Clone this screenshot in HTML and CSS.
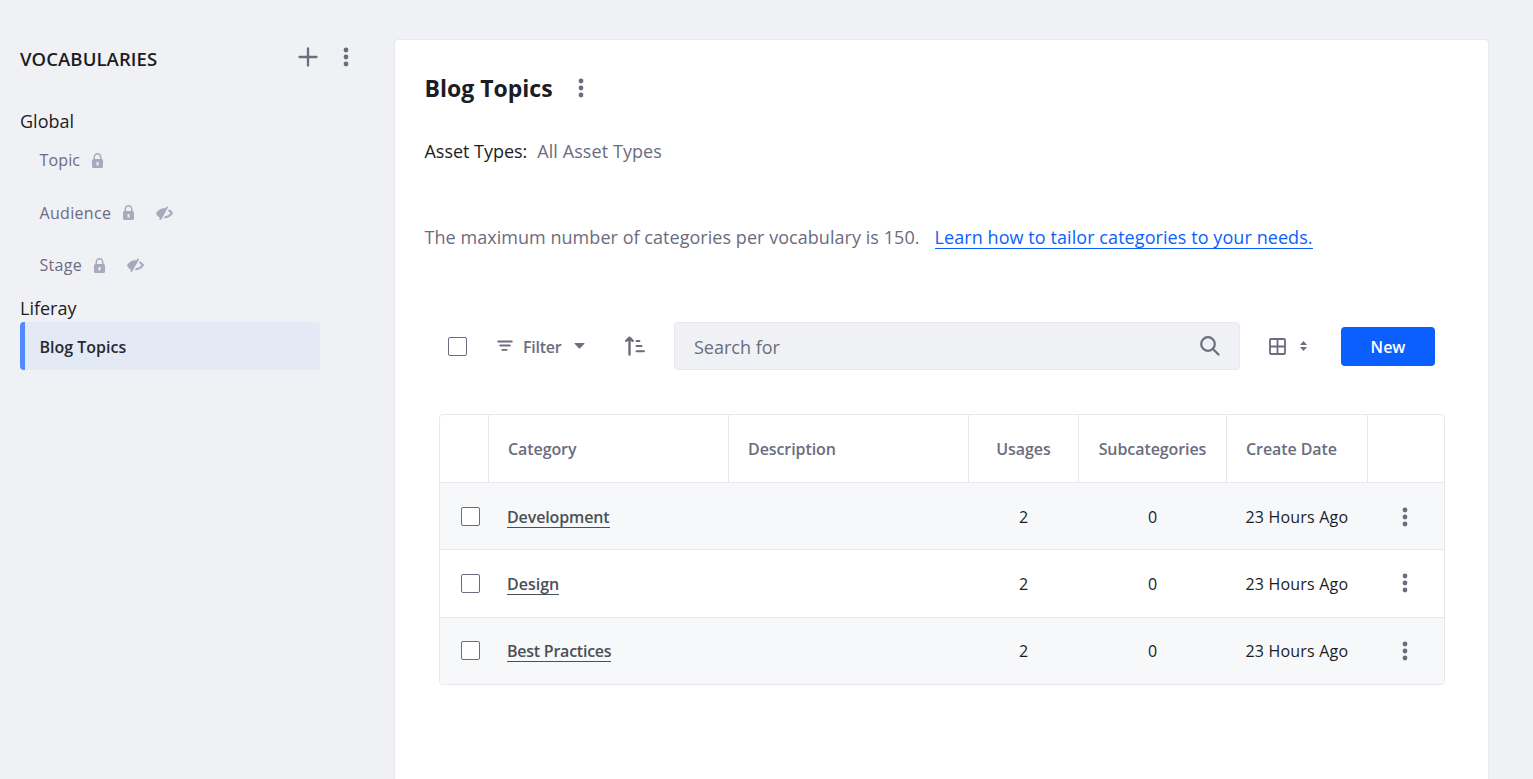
FILE: index.html
```html
<!DOCTYPE html>
<html lang="en">
<head>
<meta charset="utf-8">
<title>Categories</title>
<link rel="stylesheet" href="styles.css">
</head>
<body>
<svg class="sprite" aria-hidden="true">
  <symbol id="dots" viewBox="0 0 6 20"><circle cx="3" cy="3" r="2.400"/><circle cx="3" cy="10" r="2.400"/><circle cx="3" cy="17" r="2.400"/></symbol>
  <symbol id="lock" viewBox="0 0 11 15"><path d="M1.500 6V4.500a4 4.500 0 0 1 8 0V6a1.500 1.500 0 0 1 1.500 1.500v6A1.500 1.500 0 0 1 9.500 15h-8A1.500 1.500 0 0 1 0 13.500v-6A1.500 1.500 0 0 1 1.500 6zM3 6h5V4.500a2.500 3 0 0 0-5 0zM4.500 9v3.500h2V9z" fill-rule="evenodd"/></symbol>
  <symbol id="hidden" viewBox="0 0 17 14"><path d="M10.600.5a1 1 0 0 1 1.300 1.200L5.400 13.200a1.100 1.100 0 0 1-2-1L3.800 11.500C2 10.500.6 9 .2 8a1 1 0 0 1 0-1C2 4 5 2.300 8.500 2.300h1z"/><path d="M13 3.200c1.700 1 3 2.200 3.800 3.400a1 1 0 0 1 0 .9C15 10.700 12 12.300 7.800 12.300l1.200-2.100c2.400-.1 4.200-1.200 5.500-3.100-.6-.8-1.500-1.500-2.500-2.100z"/></symbol>
</svg>
<div class="page">
  <aside class="sidebar">
    <header class="side-head">
      <h2 class="side-title">VOCABULARIES</h2>
      <svg class="plus" viewBox="0 0 20 20"><path d="M10 1.500v17M1.500 10h17"/></svg>
      <svg class="dots"><use href="#dots"/></svg>
    </header>
    <div class="group">Global</div>
    <ul class="vocabs">
      <li class="vocab"><span>Topic</span><svg class="lock"><use href="#lock"/></svg></li>
      <li class="vocab vocab-wide"><span>Audience</span><svg class="lock"><use href="#lock"/></svg><svg class="eye"><use href="#hidden"/></svg></li>
      <li class="vocab vocab-wide"><span>Stage</span><svg class="lock"><use href="#lock"/></svg><svg class="eye"><use href="#hidden"/></svg></li>
    </ul>
    <div class="group group-site">Liferay</div>
    <div class="vocab-active"><span>Blog Topics</span></div>
  </aside>
  <main class="card">
    <div class="title-row"><h1 class="title">Blog Topics</h1><svg class="dots"><use href="#dots"/></svg></div>
    <div class="asset"><span class="asset-label">Asset Types:</span><span class="asset-value">All Asset Types</span></div>
    <div class="note"><span class="note-text">The maximum number of categories per vocabulary is 150.</span><a class="note-link">Learn how to tailor categories to your needs.</a></div>
    <div class="toolbar">
      <span class="check"></span>
      <svg class="filter-icon" viewBox="0 0 16 12"><path d="M1.200 1.500h13.600M3.200 5.500h9.600M5.200 9.800h4.600"/></svg>
      <span class="filter">Filter</span>
      <svg class="caret" viewBox="0 0 12 7"><path d="M.8 0h10.400q1.200 0 .5 1L6.700 6.200q-.7.700-1.400 0L.3 1Q-.4 0 .8 0z"/></svg>
      <svg class="sort" viewBox="0 0 20 20"><path d="M4.500 18.500V2.500M1.300 4.800L4.500 1.700 7.700 4.800"/><path class="sort-lines" d="M11.500 5h3M11.500 10h5M11.500 15.200h7.500"/></svg>
      <div class="search"><span>Search for</span><svg class="glass" viewBox="0 0 20 20"><circle cx="8" cy="8" r="6.800"/><path d="M13 13l5.500 5.500"/></svg></div>
      <svg class="grid" viewBox="0 0 17 17"><rect x="1" y="1" width="15" height="15" rx="1"/><path d="M8.500 1v15M1 8.500h15"/></svg>
      <svg class="updown" viewBox="0 0 7 10"><path d="M0 4L3.500 0 7 4zM0 6h7l-3.500 4z"/></svg>
      <button class="new">New</button>
    </div>
    <div class="table-wrap">
      <table class="table">
        <colgroup><col class="c-check"><col class="c-wide"><col class="c-wide"><col class="c-usage"><col class="c-sub"><col class="c-date"><col class="c-act"></colgroup>
        <thead><tr><th></th><th>Category</th><th>Description</th><th class="mid">Usages</th><th class="mid">Subcategories</th><th>Create Date</th><th></th></tr></thead>
        <tbody>
          <tr class="r1"><td class="pick"><span class="check"></span></td><td class="name"><a>Development</a></td><td></td><td class="mid">2</td><td class="mid">0</td><td class="date">23 Hours Ago</td><td class="act"><svg class="dots"><use href="#dots"/></svg></td></tr>
          <tr class="r2"><td class="pick"><span class="check"></span></td><td class="name"><a>Design</a></td><td></td><td class="mid">2</td><td class="mid">0</td><td class="date">23 Hours Ago</td><td class="act"><svg class="dots"><use href="#dots"/></svg></td></tr>
          <tr class="r3"><td class="pick"><span class="check"></span></td><td class="name tight"><a>Best Practices</a></td><td></td><td class="mid">2</td><td class="mid">0</td><td class="date">23 Hours Ago</td><td class="act"><svg class="dots"><use href="#dots"/></svg></td></tr>
        </tbody>
      </table>
    </div>
  </main>
</div>
</body>
</html>
```
FILE: styles.css
```css
* { box-sizing: border-box; }
body { margin: 0; background: #f0f1f5; font-family: "Open Sans", "Noto Sans", sans-serif; color: #1c1c24; overflow: hidden; }
h1, h2, ul { margin: 0; padding: 0; list-style: none; }
svg { display: block; flex: none; fill: #6b6c7e; }
.sprite { width: 0; height: 0; position: absolute; }
.page { display: flex; height: 779px; }
.dots { width: 6px; height: 20px; }

.sidebar { width: 394px; flex: none; padding: 45px 0 0 20px; }
.side-head { display: flex; align-items: center; height: 24px; }
.side-title { width: 278px; font-size: 18.500px; line-height: 26px; font-weight: 600; letter-spacing: 0.080px; padding-top: 3px; }
.plus { width: 20px; height: 20px; margin-right: 25px; fill: none; stroke: #6b6c7e; stroke-width: 2.300; stroke-linecap: round; }
.group { font-size: 18px; line-height: 26px; margin-top: 39px; height: 26px; }
.vocab { display: flex; align-items: center; height: 52.600px; padding-left: 19.500px; font-size: 16px; letter-spacing: 0.150px; color: #6b6c7e; }
.vocab-wide { letter-spacing: 0.320px; }
.vocabs { height: 157px; }
.lock { width: 11px; height: 15px; margin-left: 12px; fill: #a7a9bc; }
.eye { width: 17px; height: 14px; margin-left: 22px; fill: #a7a9bc; }
.group-site { margin-top: 4px; }
.vocab-active { display: flex; align-items: center; width: 300px; height: 48px; margin-top: 1px; padding: 2px 0 0 14.500px; border-left: 5px solid #528bff; border-radius: 4px; background: #e3eaf6; font-size: 16px; font-weight: 600; color: #272833; }

.card { width: 1095px; height: 760px; margin-top: 39px; padding: 32px 0 0 29.500px; background: #fff; border: 1px solid #e7e7ed; border-radius: 4px; }
.title-row { display: flex; align-items: center; height: 32px; gap: 25.500px; }
.title { font-size: 23px; line-height: 32px; font-weight: 700; }
.asset { display: flex; gap: 10px; margin-top: 33px; font-size: 18px; line-height: 28px; }
.asset-label { letter-spacing: -0.030px; }
.asset-value { letter-spacing: 0.080px; }
.asset-value, .note { color: #6b6c7e; }
.note { display: flex; gap: 15px; margin-top: 61px; height: 22px; font-size: 18px; line-height: 22px; letter-spacing: 0.045px; }
.note-link { color: #0b5fff; border-bottom: 1px solid #0b5fff; height: 23px; white-space: nowrap; letter-spacing: 0.075px; }
.note-text { white-space: nowrap; }

.toolbar { display: flex; align-items: center; height: 48px; margin: 74px 0 0 23.500px; }
.check { display: block; width: 19px; height: 19px; border: 1px solid #6b6c7e; border-radius: 2px; background: #fff; flex: none; }
.filter-icon { width: 16px; height: 12px; margin-left: 29.500px; fill: none; stroke: #6b6c7e; stroke-width: 1.800; stroke-linecap: round; }
.filter { width: 39px; margin-left: 10.500px; padding-top: 1px; font-size: 16px; letter-spacing: -0.250px; font-weight: 600; color: #6b6c7e; }
.caret { width: 11px; height: 6px; margin-left: 11.500px; }
.sort { width: 20px; height: 20px; margin-left: 40.500px; fill: none; stroke: #6b6c7e; stroke-width: 2.400; stroke-linecap: round; stroke-linejoin: round; }
.sort-lines { stroke-width: 1.900; }
.search { display: flex; align-items: center; justify-content: space-between; width: 566px; height: 48px; margin-left: 29px; padding: 0 19px 0 19px; border: 1px solid #e7e7ed; border-radius: 4px; background: #f0f1f5; font-size: 18px; color: #6b6c7e; }
.search span { padding-top: 1px; }
.glass { width: 20px; height: 20px; fill: none; stroke: #6b6c7e; stroke-width: 2.200; stroke-linecap: round; }
.grid { width: 17px; height: 17px; margin-left: 29px; fill: none; stroke: #6b6c7e; stroke-width: 1.800; }
.updown { width: 7px; height: 10px; margin-left: 14px; }
.new { width: 94px; height: 39px; margin-left: 34px; padding: 1px 0 0; border: 0; border-radius: 4px; background: #0b5fff; color: #fff; font: 600 16px "Open Sans", "Noto Sans", sans-serif; }

.table-wrap { width: 1006px; margin: 44px 0 0 14.500px; border: 1px solid #e7e7ed; border-radius: 4px; overflow: hidden; }
.table { width: 1004px; table-layout: fixed; border-collapse: separate; border-spacing: 0; font-size: 16px; }
.c-check { width: 49px; }
.c-wide { width: 240px; }
.c-usage { width: 110px; }
.c-sub { width: 148px; }
.c-date { width: 141px; }
.c-act { width: 76px; }
.table th { height: 68px; padding: 1px 0 0 19px; text-align: left; font-weight: 600; letter-spacing: -0.080px; color: #6b6c7e; border-right: 1px solid #e7e7ed; border-bottom: 1px solid #e7e7ed; }
.table th:last-child { border-right: 0; }
.table .mid { padding-left: 0; padding-right: 0; text-align: center; }
.table td { padding: 1px 0 0; border-bottom: 1px solid #e7e7ed; white-space: nowrap; }
.table td.mid { padding-right: 1px; }
.r1 { height: 67px; background: #f7f8fa; }
.r2 { height: 68px; }
.r3 { height: 66px; background: #f7f8fa; }
.table .r3 td, .table .r2 .pick, .table .r2 .act { padding-top: 0; padding-bottom: 1px; }
.r3 td { border-bottom: 0; }
.pick .check { margin-left: 21px; }
.table .name { padding-left: 18px; font-weight: 600; letter-spacing: -0.120px; color: #495057; }
.table .r2 .name { letter-spacing: 0; }
.table .tight { letter-spacing: -0.240px; }
.name a { display: inline-block; padding-top: 2px; line-height: 19px; border-bottom: 1px solid #495057; }
.table .date { padding-left: 18.400px; letter-spacing: 0.200px; }
.act .dots { margin-left: 34px; }
```
